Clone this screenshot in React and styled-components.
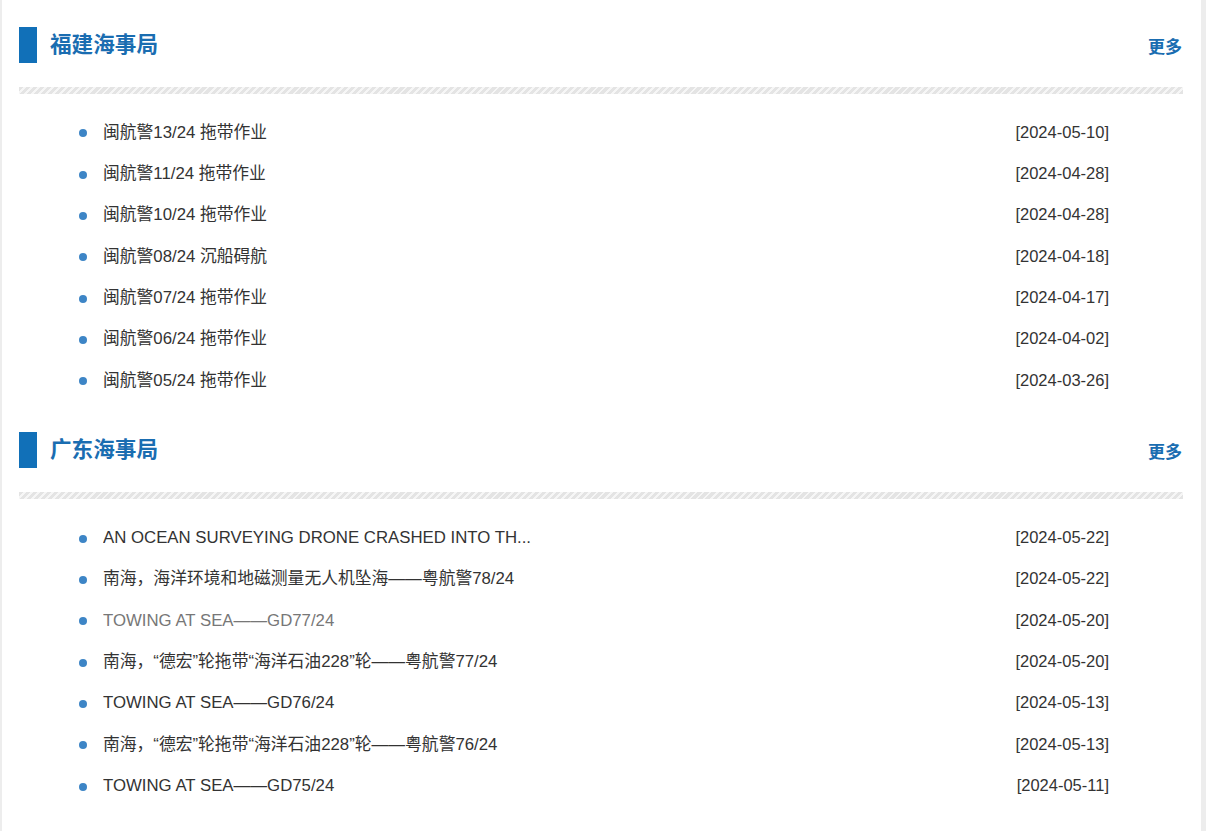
import React from "react";
import styled, { createGlobalStyle } from "styled-components";

const Global = createGlobalStyle`
  html, body { margin: 0; padding: 0; background: #ededed; }
  body { font-family: "Liberation Sans", "Noto Sans CJK SC", sans-serif; }
  a { text-decoration: none; }
`;

const Page = styled.div`
  margin-left: 2px;
  width: 1199px;
  min-height: 831px;
  background: #fff;
  padding: 0 18px 0 17px;
  box-sizing: border-box;
`;

const Section = styled.section`
  padding-top: 27px;
`;

const Header = styled.div`
  display: flex;
  align-items: center;
  height: 36px;
`;

const Bar = styled.span`
  width: 18px;
  height: 36px;
  background: #1170b8;
  flex: none;
`;

const Title = styled.h2`
  margin: 0 0 0 13px;
  font-size: 21.6px;
  font-weight: bold;
  color: #1a6db1;
  line-height: 36px;
  flex: 1;
`;

const More = styled.a`
  font-size: 17px;
  font-weight: bold;
  color: #1a6db1;
  margin-right: 1px;
`;

const Stripe = styled.div`
  margin-top: 24px;
  height: 7px;
  background: repeating-linear-gradient(
    -45deg,
    #e4e4e4 0 3px,
    #f6f6f6 3px 5px
  );
`;

const List = styled.ul`
  list-style: none;
  margin: 0;
  padding: 17.8px 74px 4px 0;
`;

const Item = styled.li`
  display: flex;
  align-items: center;
  height: 41.33px;
  line-height: 41.33px;
  font-size: 16.8px;
  color: #333;
  &::before {
    content: "";
    flex: none;
    width: 8px;
    height: 8px;
    border-radius: 50%;
    background: #3d85c6;
    margin: 2px 16px 0 60px;
  }
`;

const ItemLink = styled.a`
  flex: 1;
  color: ${(p) => (p.$visited ? "#777" : "#333")};
  white-space: nowrap;
  overflow: hidden;
`;

const DateText = styled.span`
  flex: none;
  color: #333;
  font-size: 16.5px;
`;

const sections = [
  {
    title: "福建海事局",
    items: [
      ["闽航警13/24 拖带作业", "2024-05-10"],
      ["闽航警11/24 拖带作业", "2024-04-28"],
      ["闽航警10/24 拖带作业", "2024-04-28"],
      ["闽航警08/24 沉船碍航", "2024-04-18"],
      ["闽航警07/24 拖带作业", "2024-04-17"],
      ["闽航警06/24 拖带作业", "2024-04-02"],
      ["闽航警05/24 拖带作业", "2024-03-26"],
    ],
  },
  {
    title: "广东海事局",
    items: [
      ["AN OCEAN SURVEYING DRONE CRASHED INTO TH...", "2024-05-22"],
      ["南海，海洋环境和地磁测量无人机坠海——粤航警78/24", "2024-05-22"],
      ["TOWING AT SEA——GD77/24", "2024-05-20", true],
      ["南海，“德宏”轮拖带“海洋石油228”轮——粤航警77/24", "2024-05-20"],
      ["TOWING AT SEA——GD76/24", "2024-05-13"],
      ["南海，“德宏”轮拖带“海洋石油228”轮——粤航警76/24", "2024-05-13"],
      ["TOWING AT SEA——GD75/24", "2024-05-11"],
    ],
  },
];

export default function App() {
  return (
    <>
      <Global />
      <Page>
        {sections.map((s) => (
          <Section key={s.title}>
            <Header>
              <Bar />
              <Title>{s.title}</Title>
              <More>更多</More>
            </Header>
            <Stripe />
            <List>
              {s.items.map(([t, d, v], i) => (
                <Item key={i}>
                  <ItemLink $visited={v}>{t}</ItemLink>
                  <DateText>[{d}]</DateText>
                </Item>
              ))}
            </List>
          </Section>
        ))}
      </Page>
    </>
  );
}
